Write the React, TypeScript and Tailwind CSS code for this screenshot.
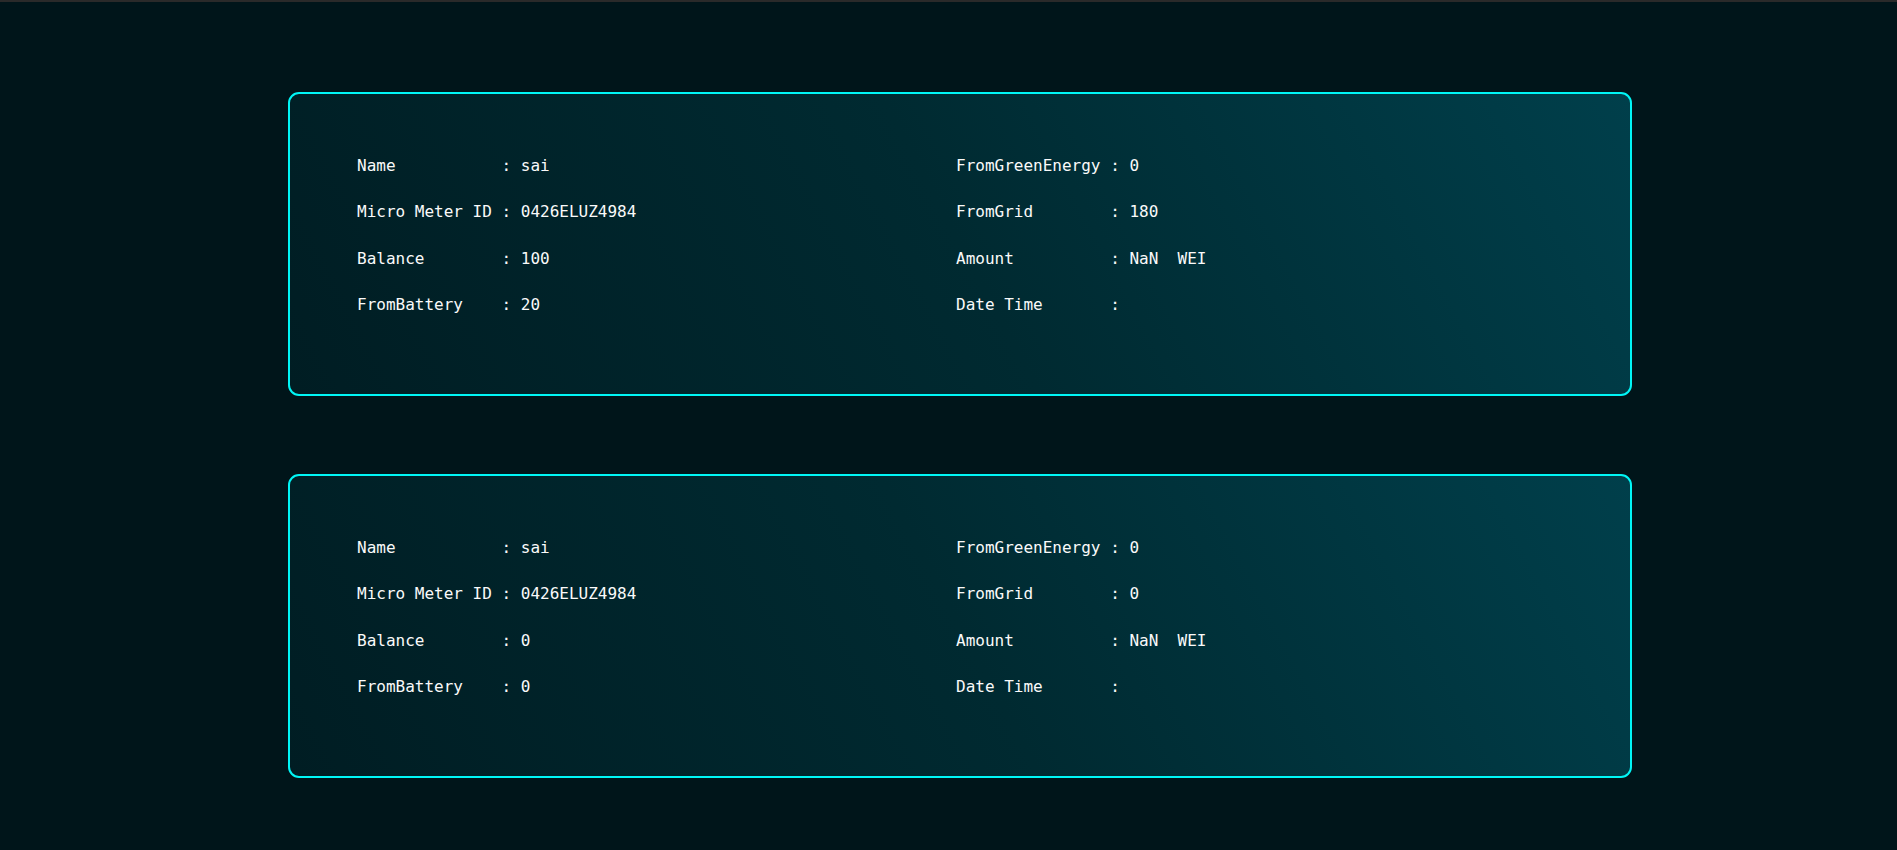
import React from "react";

type Rec = {
  name: string;
  meter: string;
  balance: string;
  battery: string;
  green: string;
  grid: string;
  amount: string;
  date: string;
};

const records: Rec[] = [
  { name: "sai", meter: "0426ELUZ4984", balance: "100", battery: "20", green: "0", grid: "180", amount: "NaN  WEI", date: "" },
  { name: "sai", meter: "0426ELUZ4984", balance: "0", battery: "0", green: "0", grid: "0", amount: "NaN  WEI", date: "" },
];

function Card({ r }: { r: Rec }) {
  const left = [
    `Name           : ${r.name}`,
    `Micro Meter ID : ${r.meter}`,
    `Balance        : ${r.balance}`,
    `FromBattery    : ${r.battery}`,
  ];
  const right = [
    `FromGreenEnergy : ${r.green}`,
    `FromGrid        : ${r.grid}`,
    `Amount          : ${r.amount}`,
    `Date Time       : ${r.date}`,
  ];
  return (
    <div className="w-[1344px] h-[304px] rounded-[11px] border-2 border-[#00f6f6] bg-[linear-gradient(62deg,#001d23_0%,#002a31_50%,#003f4b_100%)] pt-[49px] pb-[65px] pl-[67px] flex">
      <div className="w-[599px] flex flex-col">
        {left.map((t, i) => (
          <div key={i} className="whitespace-pre leading-[46.4px] h-[46.4px]">{t}</div>
        ))}
      </div>
      <div className="flex flex-col">
        {right.map((t, i) => (
          <div key={i} className="whitespace-pre leading-[46.4px] h-[46.4px]">{t}</div>
        ))}
      </div>
    </div>
  );
}

export default function App() {
  return (
    <div
      className="min-h-screen bg-[#00151a] border-t-2 border-[#2a2a2a] text-[#fafafa] text-[16px]"
      style={{ fontFamily: '"DejaVu Sans Mono", "Liberation Mono", monospace' }}
    >
      <div className="pt-[90px] pl-[288px] flex flex-col gap-[78px] pb-[72px]">
        {records.map((r, i) => (
          <Card key={i} r={r} />
        ))}
      </div>
    </div>
  );
}
